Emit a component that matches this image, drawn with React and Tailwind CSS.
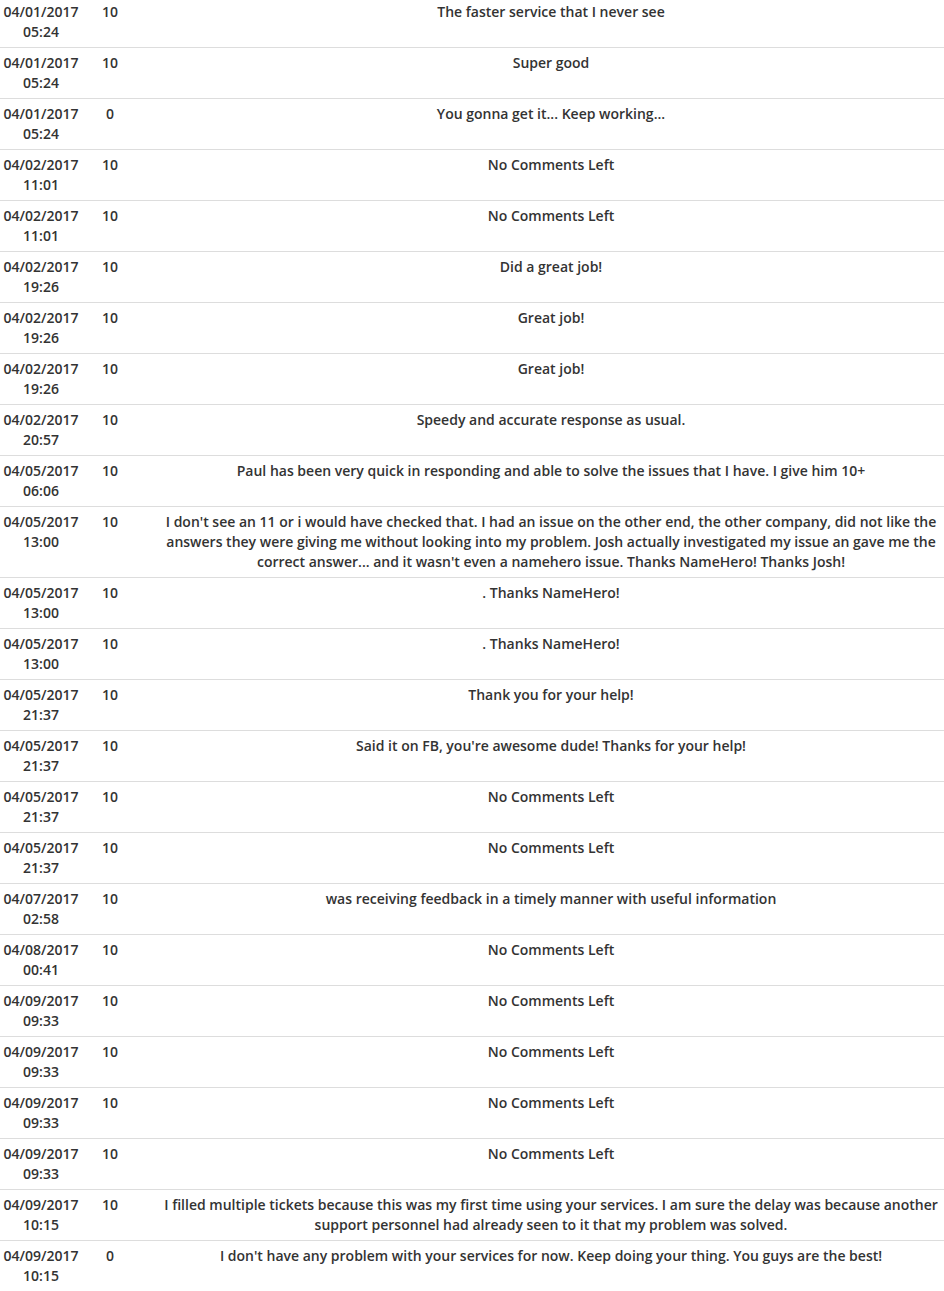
const rows = [
  ['04/01/2017', '05:24', '10', 'The faster service that I never see'],
  ['04/01/2017', '05:24', '10', 'Super good'],
  ['04/01/2017', '05:24', '0', 'You gonna get it... Keep working...'],
  ['04/02/2017', '11:01', '10', 'No Comments Left'],
  ['04/02/2017', '11:01', '10', 'No Comments Left'],
  ['04/02/2017', '19:26', '10', 'Did a great job!'],
  ['04/02/2017', '19:26', '10', 'Great job!'],
  ['04/02/2017', '19:26', '10', 'Great job!'],
  ['04/02/2017', '20:57', '10', 'Speedy and accurate response as usual.'],
  ['04/05/2017', '06:06', '10', 'Paul has been very quick in responding and able to solve the issues that I have. I give him 10+'],
  ['04/05/2017', '13:00', '10', "I don't see an 11 or i would have checked that. I had an issue on the other end, the other company, did not like the answers they were giving me without looking into my problem. Josh actually investigated my issue an gave me the correct answer... and it wasn't even a namehero issue. Thanks NameHero! Thanks Josh!"],
  ['04/05/2017', '13:00', '10', '. Thanks NameHero!'],
  ['04/05/2017', '13:00', '10', '. Thanks NameHero!'],
  ['04/05/2017', '21:37', '10', 'Thank you for your help!'],
  ['04/05/2017', '21:37', '10', "Said it on FB, you're awesome dude! Thanks for your help!"],
  ['04/05/2017', '21:37', '10', 'No Comments Left'],
  ['04/05/2017', '21:37', '10', 'No Comments Left'],
  ['04/07/2017', '02:58', '10', 'was receiving feedback in a timely manner with useful information'],
  ['04/08/2017', '00:41', '10', 'No Comments Left'],
  ['04/09/2017', '09:33', '10', 'No Comments Left'],
  ['04/09/2017', '09:33', '10', 'No Comments Left'],
  ['04/09/2017', '09:33', '10', 'No Comments Left'],
  ['04/09/2017', '09:33', '10', 'No Comments Left'],
  ['04/09/2017', '10:15', '10', 'I filled multiple tickets because this was my first time using your services. I am sure the delay was because another support personnel had already seen to it that my problem was solved.'],
  ['04/09/2017', '10:15', '0', "I don't have any problem with your services for now. Keep doing your thing. You guys are the best!"],
];

export default function App() {
  return (
    <div className="bg-white min-h-screen overflow-hidden">
      <div
        className="-mt-[3px] text-[14px] leading-[20px] font-semibold text-[#333333]"
        style={{ fontFamily: '"Open Sans", "Liberation Sans", sans-serif' }}
      >
        {rows.map((r, i) => (
          <div
            key={i}
            className={`grid grid-cols-[82px_56px_1fr] ${i > 0 ? 'border-t border-[#dddddd]' : ''}`}
          >
            <div className="text-center py-[5px]">
              {r[0]}
              <br />
              {r[1]}
            </div>
            <div className="text-center py-[5px]">{r[2]}</div>
            <div className="text-center py-[5px] pl-[24px] pr-[4px]">{r[3]}</div>
          </div>
        ))}
      </div>
    </div>
  );
}
